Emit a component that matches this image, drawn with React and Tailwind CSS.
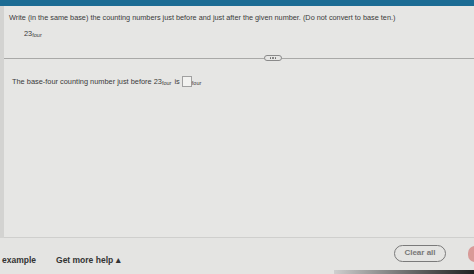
import React from 'react';

const Four = () => <sub className="text-[5.5px] relative top-[1px]">four</sub>;

export default function App() {
    return (
        <div className="w-[474px] h-[274px] overflow-hidden flex flex-col bg-[#e2e2e0] text-[#3a3a3a] font-['Liberation_Sans',Arial,sans-serif]">
            {/* top bar */}
            <div className="h-[6px] bg-[#1c6c94] shrink-0"></div>

            {/* question panel */}
            <div className="flex-1 flex">
                <div className="w-[4px] bg-[#d3d3d1]"></div>
                <div className="flex-1 flex flex-col bg-[#e6e6e4] border-b border-[#cfcfcd]">
                    <p className="text-[7.3px] pl-[5px] pt-[7px] leading-[10px]">
                        Write (in the same base) the counting numbers just before and just after the given number. (Do not convert to base ten.)
                    </p>
                    <p className="text-[7.4px] pl-[20px] pt-[6px] leading-[10px]">
                        23<Four />
                    </p>

                    {/* divider */}
                    <div className="mt-[16px] flex items-center">
                        <div className="flex-1 h-px bg-[#a9a9a7]"></div>
                        <div className="h-[6px] w-[18px] rounded-full border border-[#8a8a8a] flex items-center justify-center gap-[1px] bg-[#e6e6e4]">
                            <span className="w-[1.5px] h-[1.5px] rounded-full bg-[#666]"></span>
                            <span className="w-[1.5px] h-[1.5px] rounded-full bg-[#666]"></span>
                            <span className="w-[1.5px] h-[1.5px] rounded-full bg-[#666]"></span>
                        </div>
                        <div className="w-[192px] h-px bg-[#a9a9a7]"></div>
                    </div>

                    <p className="text-[7.4px] pl-[8px] pt-[15px] leading-[10px] flex items-center">
                        <span>The base-four counting number just before 23</span>
                        <Four />
                        <span className="ml-[3px]">is</span>
                        <span className="inline-block w-[10px] h-[11px] border border-[#a0a0a0] bg-[#f2f2f0] ml-[2px]"></span>
                        <Four />
                    </p>
                </div>
            </div>

            {/* bottom bar */}
            <div className="h-[36px] shrink-0 flex items-center relative bg-[#e4e4e2]">
                <span className="text-[8.5px] font-bold text-[#333] pl-[2px] mt-[8px]">example</span>
                <span className="text-[8.5px] font-bold text-[#333] ml-[20px] mt-[8px]">Get more help ▴</span>
                <div className="ml-auto mr-[28px] -mt-[6px] h-[17px] w-[52px] rounded-full border-[1.5px] border-[#7a7a7a] flex items-center justify-center text-[8px] font-bold text-[#777]">
                    Clear all
                </div>
                <div className="absolute right-[-8px] top-[8px] w-[14px] h-[16px] rounded-full bg-[#d99a98]"></div>
                <div className="absolute right-0 bottom-0 w-[140px] h-[4px] bg-gradient-to-r from-[#cfcfcf] to-[#222]"></div>
            </div>
        </div>
    );
}
